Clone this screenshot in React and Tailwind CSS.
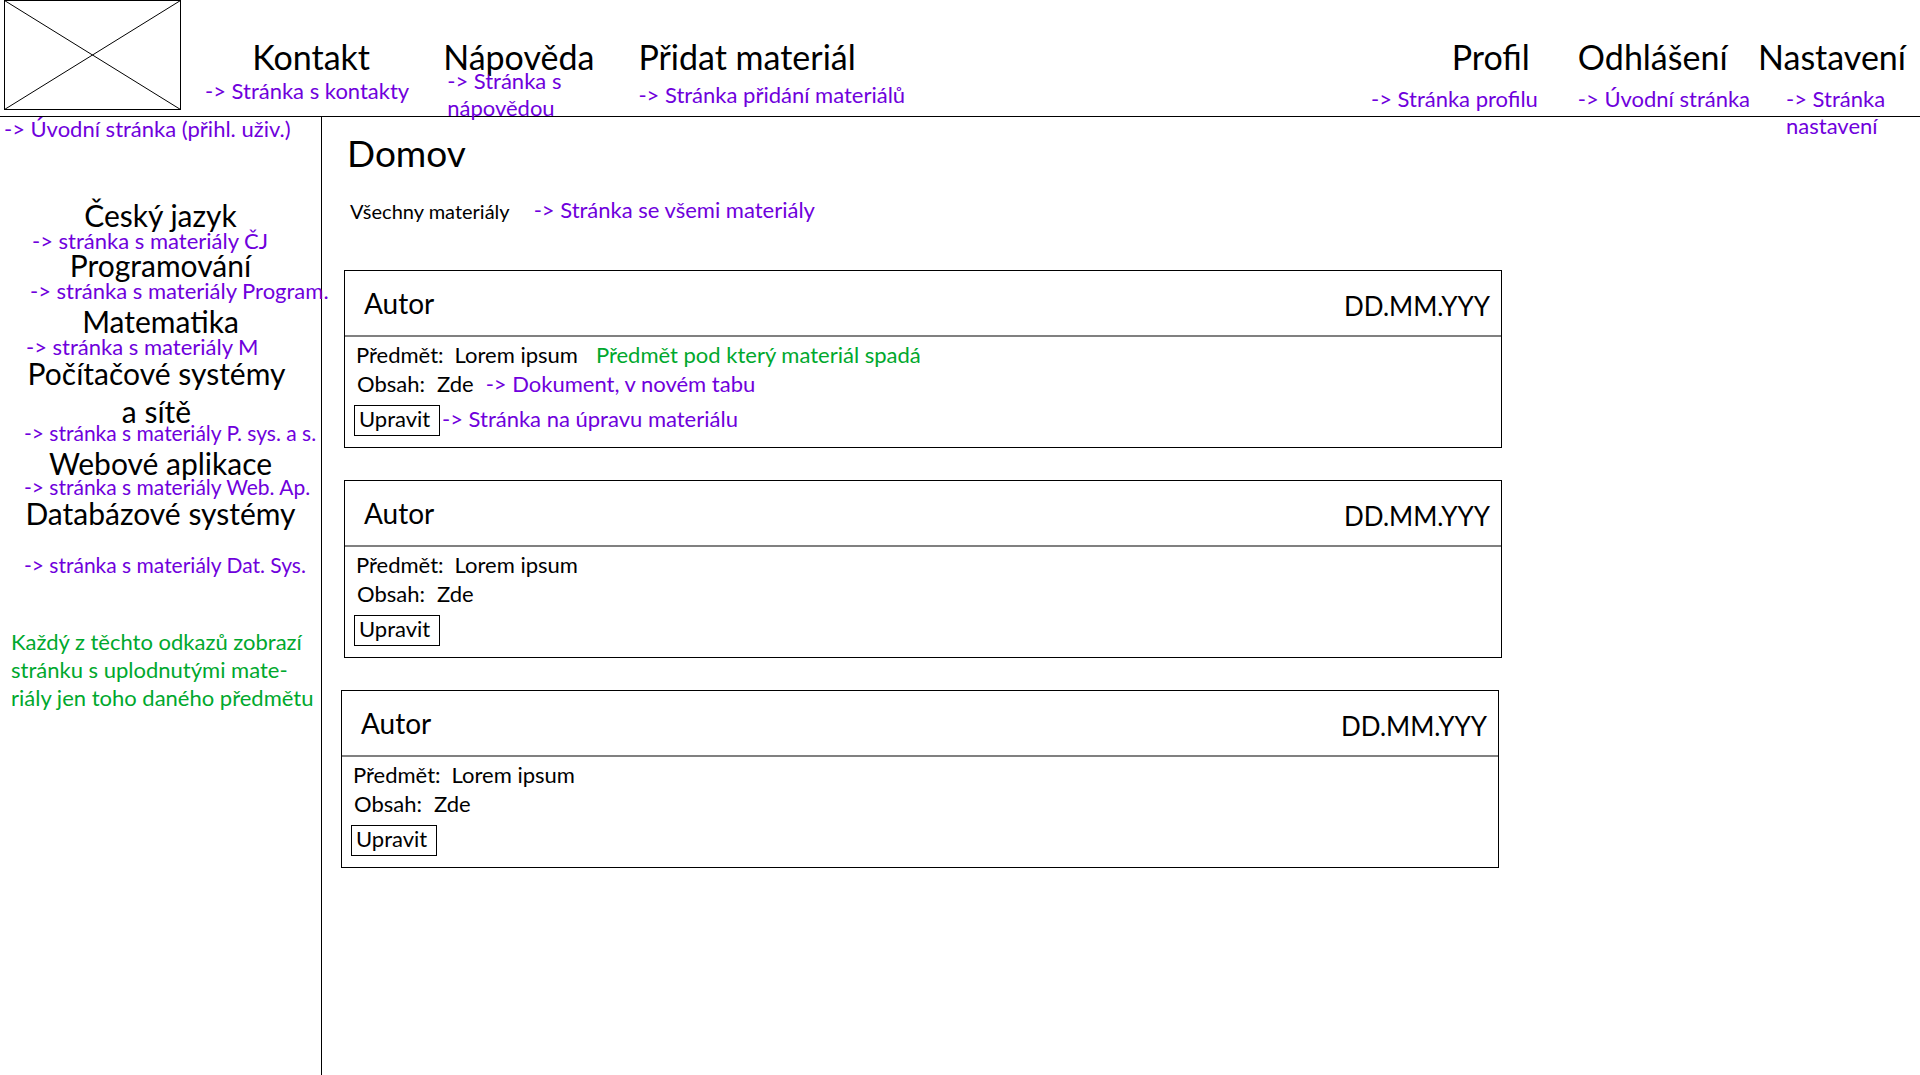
import React from "react";

const leftNav = [
  {
    label: "Kontakt",
    note: "-> Stránka s kontakty",
    item: "ml-6",
    title: "pl-2 text-center",
    noteClass: "",
  },
  {
    label: "Nápověda",
    note: "-> Stránka s\nnápovědou",
    item: "ml-[34px]",
    title: "",
    noteClass: "ml-1 -mt-2.5 -mb-4",
  },
  {
    label: "Přidat materiál",
    note: "-> Stránka přidání materiálů",
    item: "ml-11",
    title: "",
    noteClass: "mt-1",
  },
];

const rightNav = [
  {
    label: "Profil",
    note: "-> Stránka profilu",
    item: "",
    title: "pr-2 text-right",
    noteClass: "mt-2",
  },
  {
    label: "Odhlášení",
    note: "-> Úvodní stránka",
    item: "ml-10",
    title: "",
    noteClass: "mt-2",
  },
  {
    label: "Nastavení",
    note: "-> Stránka\nnastavení",
    item: "ml-2",
    title: "",
    noteClass: "mt-2 -mb-10 pl-7",
  },
];

const subjects = [
  { label: "Český jazyk", note: "-> stránka s materiály ČJ", item: "", title: "leading-[30px]", noteClass: "pl-8 text-[22px]" },
  { label: "Programování", note: "-> stránka s materiály Program.", item: "-mt-0.5", title: "leading-[30px]", noteClass: "pl-[30px] text-[22px]" },
  { label: "Matematika", note: "-> stránka s materiály M", item: "mt-1", title: "leading-[30px]", noteClass: "pl-[26px] text-[22px]" },
  { label: "Počítačové systémy\na sítě", note: "-> stránka s materiály P. sys. a s.", item: "-mt-1", title: "leading-[38px] pr-2", noteClass: "-mt-2 pl-6 text-[21px]" },
  { label: "Webové aplikace", note: "-> stránka s materiály Web. Ap.", item: "mt-1", title: "leading-[30px]", noteClass: "-mt-0.5 pl-6 text-[21px]" },
  { label: "Databázové systémy", note: "-> stránka s materiály Dat. Sys.", item: "", title: "leading-[30px]", noteClass: "mt-[26px] pl-6 text-[21px]" },
];

const materials = [
  {
    id: 1,
    card: "ml-[3px]",
    subjectNote: "Předmět pod který materiál spadá",
    contentNote: "-> Dokument, v novém tabu",
    editNote: "-> Stránka na úpravu materiálu",
  },
  { id: 2, card: "ml-[3px]" },
  { id: 3, card: "" },
];

function Note({ children, className = "text-[22px]" }) {
  return <p className={`whitespace-pre text-[#6f00dc] ${className}`}>{children}</p>;
}

function NavItem({ entry }) {
  return (
    <li className={entry.item}>
      <a href="#" className={`block whitespace-nowrap text-[34px] leading-10 ${entry.title}`}>
        {entry.label}
      </a>
      <Note className={`text-[22px] leading-[27px] ${entry.noteClass}`}>{entry.note}</Note>
    </li>
  );
}

function Logo() {
  return (
    <a href="#" aria-label="Úvodní stránka" className="mb-1.5 ml-1 shrink-0">
      <svg width="177" height="110" viewBox="0 0 177 110" fill="none" stroke="#000" className="block">
        <rect x="0.5" y="0.5" width="176" height="109" />
        <path d="M0.5 0.5 L176.5 109.5 M176.5 0.5 L0.5 109.5" />
      </svg>
    </a>
  );
}

function MaterialCard({ material }) {
  return (
    <article className={`w-full max-w-[1158px] border border-black ${material.card}`}>
      <header className="flex items-end justify-between border-b-2 border-[#808080] py-[15px] pr-[11px] pl-[19px]">
        <h2 className="text-[28px] leading-[34px]">Autor</h2>
        <time className="text-[26px] leading-7">DD.MM.YYY</time>
      </header>
      <div className="pt-[3px] pb-[11px] text-[22px] leading-[29px]">
        <div className="flex pl-[11px]">
          <span>Předmět:</span>
          <span className="ml-[11px]">Lorem ipsum</span>
          {material.subjectNote && (
            <span className="ml-[18px] text-[#00a82d]">{material.subjectNote}</span>
          )}
        </div>
        <div className="flex pl-3">
          <span>Obsah:</span>
          <a href="#" className="ml-3">Zde</a>
          {material.contentNote && <Note className="ml-3">{material.contentNote}</Note>}
        </div>
        <div className="mt-[7px] flex items-start gap-[2px] pl-[9px]">
          <button type="button" className="w-[86px] border border-black pb-1 pl-1 text-left leading-[25px]">
            Upravit
          </button>
          {material.editNote && <Note className="leading-[27px]">{material.editNote}</Note>}
        </div>
      </div>
    </article>
  );
}

export default function App() {
  return (
    <div className="flex min-h-screen flex-col bg-white font-['Lato','Noto_Sans',sans-serif] text-black">
      <header className="flex items-start border-b border-black">
        <Logo />
        <nav aria-label="Hlavní" className="flex flex-1 justify-between pt-[37px] pr-3.5">
          <ul className="flex items-start">
            {leftNav.map((entry) => (
              <NavItem key={entry.label} entry={entry} />
            ))}
          </ul>
          <ul className="flex items-start">
            {rightNav.map((entry) => (
              <NavItem key={entry.label} entry={entry} />
            ))}
          </ul>
        </nav>
      </header>

      <div className="flex flex-1">
        <aside className="w-[322px] shrink-0 border-r border-black">
          <Note className="pl-1 text-[22px] leading-[23px]">-&gt; Úvodní stránka (přihl. uživ.)</Note>
          <ul className="mt-[60px]">
            {subjects.map((subject) => (
              <li key={subject.label} className={subject.item}>
                <a href="#" className={`block whitespace-pre text-center text-[30px] ${subject.title}`}>
                  {subject.label}
                </a>
                <Note className={`leading-[22px] ${subject.noteClass}`}>{subject.note}</Note>
              </li>
            ))}
          </ul>
          <p className="mt-[52px] whitespace-pre pl-[11px] text-[22px] leading-7 text-[#00a82d]">
            {"Každý z těchto odkazů zobrazí\nstránku s uplodnutými mate-\nriály jen toho daného předmětu"}
          </p>
        </aside>

        <main className="min-w-0 flex-1 pt-[14px] pr-6 pl-[19px]">
          <h1 className="pl-[6px] text-[37px] leading-[44px]">Domov</h1>
          <div className="mt-[22px] flex gap-6 pl-[9px]">
            <a href="#" className="text-xl leading-7">Všechny materiály</a>
            <Note className="text-[22px] leading-[26px]">-&gt; Stránka se všemi materiály</Note>
          </div>
          <div className="mt-[45px] flex flex-col gap-8">
            {materials.map((material) => (
              <MaterialCard key={material.id} material={material} />
            ))}
          </div>
        </main>
      </div>
    </div>
  );
}
